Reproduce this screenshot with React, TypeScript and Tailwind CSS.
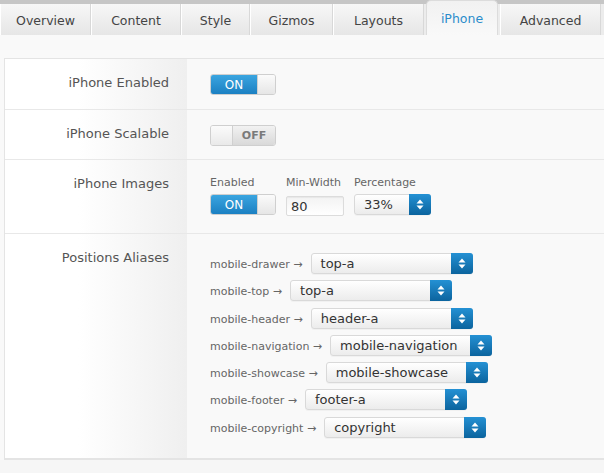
import React from "react";

const tabs = [
  { label: "Overview", w: "w-[91px]" },
  { label: "Content", w: "w-[90px]" },
  { label: "Style", w: "w-[69px]" },
  { label: "Gizmos", w: "w-[83px]" },
  { label: "Layouts", w: "w-[91px]" },
  { label: "iPhone", w: "w-[72px]", active: true },
  { label: "Advanced", w: "w-[101px]" },
];

const aliases = [
  { name: "mobile-drawer", value: "top-a" },
  { name: "mobile-top", value: "top-a" },
  { name: "mobile-header", value: "header-a" },
  { name: "mobile-navigation", value: "mobile-navigation" },
  { name: "mobile-showcase", value: "mobile-showcase" },
  { name: "mobile-footer", value: "footer-a" },
  { name: "mobile-copyright", value: "copyright" },
];

const Arrows = () => (
  <svg width="8" height="11" viewBox="0 0 8 11" className="block">
    <path d="M4 0.5 L7.5 4.5 L0.5 4.5 Z" fill="#fff" />
    <path d="M4 10.5 L7.5 6.5 L0.5 6.5 Z" fill="#fff" />
  </svg>
);

const Select = ({ value, w }: { value: string; w: string }) => (
  <div className={`flex h-[21px] ${w} rounded-[3px] border border-[#d9d9d9] bg-gradient-to-b from-white to-[#ececec] shadow-[0_1px_0_rgba(0,0,0,0.03)]`}>
    <span className="flex-1 pl-[9px] text-[13px] leading-[19px] text-[#333] whitespace-nowrap overflow-hidden">{value}</span>
    <span className="-m-px flex w-[22px] items-center justify-center rounded-r-[3px] bg-gradient-to-b from-[#2491d4] to-[#0b649e]">
      <Arrows />
    </span>
  </div>
);

const Toggle = ({ on }: { on: boolean }) => (
  <div className="flex h-[21px] w-[66px] overflow-hidden rounded-[3px] border border-[#cfcfcf]">
    {on ? (
      <>
        <span className="flex w-[46px] items-center justify-center bg-gradient-to-b from-[#3aa5e0] to-[#1b80c2] text-[12px] leading-none text-white">ON</span>
        <span className="flex-1 border-l border-[#d0d0d0] bg-gradient-to-b from-[#fbfbfb] to-[#e6e6e6]" />
      </>
    ) : (
      <>
        <span className="w-[22px] border-r border-[#d0d0d0] bg-gradient-to-b from-[#fbfbfb] to-[#e9e9e9]" />
        <span className="flex flex-1 items-center justify-center bg-gradient-to-b from-[#f2f2f2] to-[#d9d9d9] text-[11px] font-bold leading-none text-[#7a7a7a]">OFF</span>
      </>
    )}
  </div>
);

const Row = ({ label, children, last }: { label: string; children: React.ReactNode; last?: boolean }) => (
  <div className={`grid grid-cols-[182px_1fr] ${last ? "" : "border-b border-[#e8e8e8]"}`}>
    <div className="bg-gradient-to-r from-white from-40% to-[#efefef] pr-[18px] pt-[16px] text-right text-[13px] leading-[16px] text-[#555]">
      {label}
    </div>
    <div className="pl-[23px]">{children}</div>
  </div>
);

export default function App() {
  return (
    <div className="h-[473px] w-[604px] overflow-hidden bg-[#f6f6f6] font-['DejaVu_Sans',sans-serif]">
      <div className="flex h-[35px] items-end bg-[linear-gradient(#c6c6c6_4px,#ececec_4px)]">
        {tabs.map((t) =>
          t.active ? (
            <div
              key={t.label}
              className={`${t.w} mx-[2px] flex h-[35px] shrink-0 items-center justify-center rounded-t-[5px] border border-b-0 border-[#dcdcdc] bg-gradient-to-b from-[#f1f1f1] to-[#f9f9f9] pt-[3px] text-[12.5px] text-[#2a8ccb]`}
            >
              {t.label}
            </div>
          ) : (
            <div
              key={t.label}
              className={`${t.w} flex h-[31px] shrink-0 items-center justify-center border-r border-[#d8d8d8] border-l border-l-white bg-gradient-to-b from-[#f7f7f7] to-[#e6e6e6] pt-[3px] text-[12.5px] text-[#444]`}
            >
              {t.label}
            </div>
          )
        )}
      </div>

      <div className="bg-[#f9f9f9] pl-[4px] pt-[23px]">
        <div className="border-l border-t border-b-2 border-[#e4e4e4] bg-[#f9f9f9]">
          <Row label="iPhone Enabled">
            <div className="pb-[14px] pt-[15px]">
              <Toggle on />
            </div>
          </Row>
          <Row label="iPhone Scalable">
            <div className="pb-[13px] pt-[15px]">
              <Toggle on={false} />
            </div>
          </Row>
          <Row label="iPhone Images">
            <div className="flex gap-[10px] pb-[17px] pt-[16px]">
              <div className="flex flex-col">
                <span className="text-[11px] leading-[14px] text-[#666]">Enabled</span>
                <div className="mt-[4px]">
                  <Toggle on />
                </div>
              </div>
              <div className="flex flex-col">
                <span className="text-[11px] leading-[14px] text-[#666]">Min-Width</span>
                <div className="mt-[6px] h-[20px] w-[58px] rounded-[2px] border border-[#dcdcdc] bg-gradient-to-b from-[#f3f3f3] to-white pl-[4px] text-[13px] leading-[19px] text-[#333] shadow-[inset_0_1px_1px_rgba(0,0,0,0.05)]">
                  80
                </div>
              </div>
              <div className="flex flex-col">
                <span className="text-[11px] leading-[14px] text-[#666]">Percentage</span>
                <div className="mt-[4px]">
                  <Select value="33%" w="w-[77px]" />
                </div>
              </div>
            </div>
          </Row>
          <Row label="Positions Aliases" last>
            <div className="flex flex-col pb-[14px] pt-[19px]">
              {aliases.map((a) => (
                <div key={a.name} className="flex h-[27.3px] items-start">
                  <span className="mr-[8px] pt-[5px] text-[11px] leading-[13px] text-[#666] whitespace-nowrap">
                    {a.name} →
                  </span>
                  <Select value={a.value} w="w-[162px]" />
                </div>
              ))}
            </div>
          </Row>
        </div>
      </div>
    </div>
  );
}
